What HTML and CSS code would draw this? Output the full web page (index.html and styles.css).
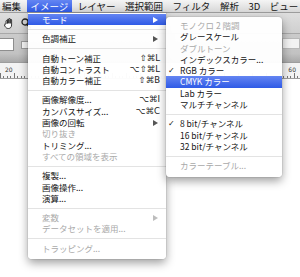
FILE: index.html
```html
<!DOCTYPE html>
<html lang="ja">
<head>
  <meta charset="UTF-8" />
  <title>イメージ メニュー</title>
  <link rel="stylesheet" href="styles.css">
</head>
<body>
  <div class="app">
    <nav class="menubar">
      <span class="mb-item">編集</span>
      <span class="mb-item active">イメージ</span>
      <span class="mb-item">レイヤー</span>
      <span class="mb-item">選択範囲</span>
      <span class="mb-item">フィルタ</span>
      <span class="mb-item">解析</span>
      <span class="mb-item">3D</span>
      <span class="mb-item">ビュー</span>
    </nav>

    <div class="optionsbar">
      <div class="tools-row">
        <svg class="tool" width="10" height="11" viewBox="0 0 10 11">
          <path d="M2 6V3.2a.7.7 0 0 1 1.4 0V5.5V1.8a.7.7 0 0 1 1.4 0V5.3V1.2a.7.7 0 0 1 1.4 0V5.4V2a.7.7 0 0 1 1.4 0V7c0 2-1.2 3.5-3.2 3.5C2.6 10.5 1.8 9.6 1 8.3L.3 6.8a.6.6 0 0 1 1-.6Z" fill="#fff" stroke="#222" stroke-width=".9" stroke-linejoin="round"/>
        </svg>
        <svg class="tool" width="10" height="11" viewBox="0 0 10 11">
          <circle cx="4" cy="4" r="3" fill="none" stroke="#222" stroke-width="1.3"/>
          <path d="M6.2 6.4L9.2 9.6" stroke="#222" stroke-width="1.8" stroke-linecap="round"/>
        </svg>
      </div>
      <div class="fields-row">
        <span class="field"></span>
        <span class="check"></span>
        <span class="field right"></span>
      </div>
    </div>

    <div class="ruler">
      <span class="r-num">20</span>
      <span class="r-num">60</span>
    </div>
    <div class="canvas"></div>

    <ul class="menu menu-main">
      <li class="item hl"><span class="label">モード</span><span class="arrow"></span></li>
      <li class="sep"></li>
      <li class="item"><span class="label">色調補正</span><span class="arrow"></span></li>
      <li class="sep"></li>
      <li class="item"><span class="label">自動トーン補正</span><span class="key">⇧⌘L</span></li>
      <li class="item"><span class="label">自動コントラスト</span><span class="key">⌥⇧⌘L</span></li>
      <li class="item"><span class="label">自動カラー補正</span><span class="key">⇧⌘B</span></li>
      <li class="sep"></li>
      <li class="item"><span class="label">画像解像度...</span><span class="key">⌥⌘I</span></li>
      <li class="item"><span class="label">カンバスサイズ...</span><span class="key">⌥⌘C</span></li>
      <li class="item"><span class="label">画像の回転</span><span class="arrow"></span></li>
      <li class="item off"><span class="label">切り抜き</span></li>
      <li class="item"><span class="label">トリミング...</span></li>
      <li class="item off"><span class="label">すべての領域を表示</span></li>
      <li class="sep"></li>
      <li class="item"><span class="label">複製...</span></li>
      <li class="item"><span class="label">画像操作...</span></li>
      <li class="item"><span class="label">演算...</span></li>
      <li class="sep"></li>
      <li class="item off"><span class="label">変数</span><span class="arrow"></span></li>
      <li class="item off"><span class="label">データセットを適用...</span></li>
      <li class="sep"></li>
      <li class="item off"><span class="label">トラッピング...</span></li>
    </ul>

    <ul class="menu menu-sub">
      <li class="item off"><span class="mark"></span><span class="label">モノクロ 2 階調</span></li>
      <li class="item"><span class="mark"></span><span class="label">グレースケール</span></li>
      <li class="item off"><span class="mark"></span><span class="label">ダブルトーン</span></li>
      <li class="item"><span class="mark"></span><span class="label">インデックスカラー...</span></li>
      <li class="item"><span class="mark">✓</span><span class="label">RGB カラー</span></li>
      <li class="item hl"><span class="mark"></span><span class="label">CMYK カラー</span></li>
      <li class="item"><span class="mark"></span><span class="label">Lab カラー</span></li>
      <li class="item"><span class="mark"></span><span class="label">マルチチャンネル</span></li>
      <li class="sep"></li>
      <li class="item"><span class="mark">✓</span><span class="label">8 bit/チャンネル</span></li>
      <li class="item"><span class="mark"></span><span class="label">16 bit/チャンネル</span></li>
      <li class="item"><span class="mark"></span><span class="label">32 bit/チャンネル</span></li>
      <li class="sep"></li>
      <li class="item off"><span class="mark"></span><span class="label">カラーテーブル...</span></li>
    </ul>
  </div>
</body>
</html>
```

FILE: styles.css
```css
:root {
  --fg: #141414;
  --off: #a9a9a9;
  --hl-top: #6485f2;
  --hl-bottom: #2f5ae6;
  --sep: #e3e3e3;
}

body {
  margin: 0;
  font-family: "Noto Sans CJK JP", "Noto Sans", sans-serif;
  color: var(--fg);
  background: #fff;
  overflow: hidden;
}

.app {
  position: relative;
  width: 300px;
  height: 277px;
  display: flex;
  flex-direction: column;
  overflow: hidden;
}

/* menu bar */
.menubar {
  box-sizing: border-box;
  height: 13px;
  display: flex;
  align-items: flex-start;
  gap: 9.5px;
  padding-left: 2px;
  font-size: 9.5px;
  background: linear-gradient(#f5f5f5, #d7d7d7);
  border-bottom: 1px solid #9c9c9c;
}

.mb-item {
  line-height: 12px;
  white-space: nowrap;
}

.mb-item.active {
  padding: 0 4px;
  margin: 0 -4px;
  color: #fff;
  background: linear-gradient(var(--hl-top), var(--hl-bottom));
}

/* options bar */
.optionsbar {
  height: 49px;
  display: flex;
  flex-direction: column;
}

.tools-row {
  height: 20px;
  display: flex;
  align-items: center;
  gap: 7px;
  padding-left: 4px;
  background: linear-gradient(#dedede, #cfcfcf);
  border-bottom: 1px solid #a8a8a8;
}

.fields-row {
  flex: 1;
  display: flex;
  align-items: flex-start;
  gap: 7px;
  padding-top: 4px;
  background: linear-gradient(#cbcbcb 0, #c2c2c2 70%, #a9a9a9 100%);
}

.field {
  width: 14px;
  height: 11px;
  margin-left: -2px;
  background: #fff;
  border: 1px solid #8e8e8e;
}

.field.right {
  margin-left: auto;
  width: 16px;
  height: 9px;
  background: #f2f2f2;
  border-color: #b8b8b8;
}

.check {
  width: 6px;
  height: 6px;
  margin-top: 3px;
  background: #f6f6f6;
  border: 1px solid #9a9a9a;
}

/* ruler */
.ruler {
  height: 15px;
  display: flex;
  justify-content: space-between;
  padding: 0 4px 0 5px;
  font-family: "DejaVu Sans", sans-serif;
  font-size: 6px;
  line-height: 9px;
  background:
    repeating-linear-gradient(90deg, #777 0 1px, transparent 1px 3.5px) bottom / 100% 2px no-repeat,
    repeating-linear-gradient(90deg, #777 0 1px, transparent 1px 14px) bottom / 100% 5px no-repeat,
    #f3f3f3;
  border-top: 1px solid #9d9d9d;
  border-bottom: 1px solid #9d9d9d;
}

.r-num {
  padding-top: 2px;
  color: #333;
}

.canvas {
  flex: 1;
  background: #fff;
}

/* menus */
.menu {
  position: absolute;
  list-style: none;
  margin: 0;
  background: rgba(255, 255, 255, 0.97);
  border-radius: 0 0 4px 4px;
  box-shadow: 0 4px 10px rgba(0, 0, 0, 0.38), 0 0 0 1px rgba(0, 0, 0, 0.06);
  font-size: 8.5px;
}

.menu-main {
  left: 28px;
  top: 13px;
  width: 138px;
  padding: 1px 0 5px;
}

.menu-sub {
  left: 166px;
  top: 17px;
  width: 116px;
  padding: 3px 0 5px;
  border-radius: 4px;
}

.item {
  display: flex;
  align-items: center;
  height: 11.3px;
  line-height: 11.3px;
  padding: 0 6px 0 14px;
  white-space: nowrap;
}

.menu-sub .item {
  padding-left: 2px;
}

.item .label {
  flex: 1;
}

.item.off {
  color: var(--off);
}

.item.hl {
  color: #fff;
  background: linear-gradient(var(--hl-top), var(--hl-bottom));
}

.key {
  font-family: "DejaVu Sans", sans-serif;
  font-size: 8.5px;
  color: #222;
}

.arrow {
  width: 0;
  height: 0;
  margin-right: 2px;
  border-top: 3px solid transparent;
  border-bottom: 3px solid transparent;
  border-left: 5px solid #555;
}

.item.hl .arrow {
  border-left-color: #fff;
}

.item.off .arrow {
  border-left-color: #bdbdbd;
}

.mark {
  width: 12px;
  font-family: "DejaVu Sans", sans-serif;
  font-size: 8px;
}

.sep {
  height: 1px;
  margin: 3.5px 0;
  background: var(--sep);
}
```
